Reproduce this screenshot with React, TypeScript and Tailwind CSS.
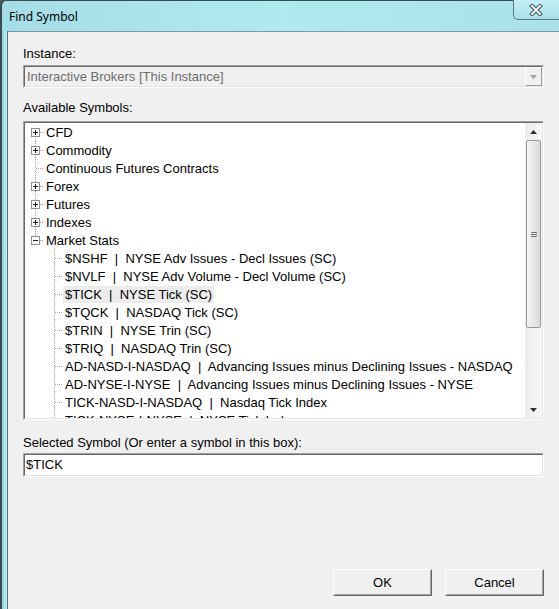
import React from "react"

type Row = {
  label: string
  level: 0 | 1
  box?: "plus" | "minus"
  first?: boolean
  lastRoot?: boolean
  selected?: boolean
}

const rows: Row[] = [
  { label: "CFD", level: 0, box: "plus", first: true },
  { label: "Commodity", level: 0, box: "plus" },
  { label: "Continuous Futures Contracts", level: 0 },
  { label: "Forex", level: 0, box: "plus" },
  { label: "Futures", level: 0, box: "plus" },
  { label: "Indexes", level: 0, box: "plus" },
  { label: "Market Stats", level: 0, box: "minus", lastRoot: true },
  { label: "$NSHF  |  NYSE Adv Issues - Decl Issues (SC)", level: 1 },
  { label: "$NVLF  |  NYSE Adv Volume - Decl Volume (SC)", level: 1 },
  { label: "$TICK  |  NYSE Tick (SC)", level: 1, selected: true },
  { label: "$TQCK  |  NASDAQ Tick (SC)", level: 1 },
  { label: "$TRIN  |  NYSE Trin (SC)", level: 1 },
  { label: "$TRIQ  |  NASDAQ Trin (SC)", level: 1 },
  { label: "AD-NASD-I-NASDAQ  |  Advancing Issues minus Declining Issues - NASDAQ", level: 1 },
  { label: "AD-NYSE-I-NYSE  |  Advancing Issues minus Declining Issues - NYSE", level: 1 },
  { label: "TICK-NASD-I-NASDAQ  |  Nasdaq Tick Index", level: 1 },
  { label: "TICK-NYSE-I-NYSE  |  NYSE Tick Index", level: 1 },
]

const dot = "#a0a0a0"

// tree connector lines and the +/- box for one row
function Connector({ row }: { row: Row }) {
  const w = row.level === 0 ? 19 : 38
  return (
    <svg width={w} height={18} className="shrink-0" shapeRendering="crispEdges">
      {row.level === 0 ? (
        <>
          <line
            x1={10.5}
            x2={10.5}
            y1={row.first ? 9 : 0}
            y2={row.lastRoot ? 9 : 18}
            stroke={dot}
            strokeDasharray="1 1"
          />
          <line x1={11} x2={19} y1={9.5} y2={9.5} stroke={dot} strokeDasharray="1 1" />
          {row.box && (
            <>
              <rect x={6.5} y={5.5} width={8} height={8} fill="#fff" stroke="#919191" />
              <line x1={8} x2={13} y1={9.5} y2={9.5} stroke="#222" />
              {row.box === "plus" && <line x1={10.5} x2={10.5} y1={7} y2={12} stroke="#222" />}
            </>
          )}
        </>
      ) : (
        <>
          <line x1={29.5} x2={29.5} y1={0} y2={18} stroke={dot} strokeDasharray="1 1" />
          <line x1={30} x2={38} y1={9.5} y2={9.5} stroke={dot} strokeDasharray="1 1" />
        </>
      )}
    </svg>
  )
}

function Sunken({ className, children }: { className?: string; children?: React.ReactNode }) {
  return (
    <div className={"border border-t-[#a0a0a0] border-l-[#a0a0a0] border-b-[#ffffff] border-r-[#ffffff] " + (className ?? "")}>
      <div className="h-full w-full border border-t-[#696969] border-l-[#696969] border-b-[#e3e3e3] border-r-[#e3e3e3]">
        {children}
      </div>
    </div>
  )
}

function Button({ children }: { children: React.ReactNode }) {
  return (
    <div className="w-[99px] h-[27px] border border-t-[#ffffff] border-l-[#ffffff] border-b-[#696969] border-r-[#696969]">
      <div className="h-full w-full flex items-center justify-center bg-[#f0f0f0] border border-t-[#f0f0f0] border-l-[#f0f0f0] border-b-[#a0a0a0] border-r-[#a0a0a0] text-black">
        {children}
      </div>
    </div>
  )
}

export default function App() {
  return (
    <div
      className="w-[559px] h-[609px] overflow-hidden bg-[#4d5a60] text-[13px]"
      style={{ fontFamily: '"Liberation Sans", Arial, sans-serif' }}
    >
      <div className="h-full flex flex-col rounded-tl-[6px] border-l-2 border-t border-[#3b4b52] bg-gradient-to-r from-[#a4dde7] via-[#b0eaf1] to-[#a9e2ea]">
        {/* title bar */}
        <div className="h-[30px] flex items-start justify-between shrink-0">
          <div className="pl-[7px] pt-[7px] text-[12px] text-black" style={{ fontFamily: '"Noto Sans", "Liberation Sans", sans-serif' }}>
            Find Symbol
          </div>
          <div className="w-[46px] h-[20px] -mt-px rounded-bl-[5px] border border-[#5f7880] border-t-0 border-r-0 bg-gradient-to-b from-[#c3f0f5] to-[#a6dfe8] flex items-center justify-center pr-[1px]">
            <svg width="14" height="12" viewBox="0 0 14 12">
              <path d="M3 2 L11 10 M11 2 L3 10" stroke="#3a4d57" strokeWidth="4" strokeLinecap="square" />
              <path d="M3 2 L11 10 M11 2 L3 10" stroke="#ffffff" strokeWidth="2" strokeLinecap="square" />
            </svg>
          </div>
        </div>

        <div className="flex-1 flex min-h-0">
          {/* left glass frame */}
          <div className="w-[5px] shrink-0 bg-gradient-to-r from-[#8fd3de] to-[#bff2f6]" />
          <div className="w-px shrink-0 bg-[#5c6f76]" />

          {/* client area */}
          <div className="flex-1 flex flex-col bg-[#f0f0f0] border-t border-[#7a9aa3] pl-[15px] pr-[15px] pt-[14px] text-black">
            <div className="leading-[15px]">Instance:</div>
            <Sunken className="mt-[4px] h-[23px]">
              <div className="h-full flex items-center">
                <div className="flex-1 pl-[2px] text-[#6d6d6d] whitespace-nowrap">Interactive Brokers [This Instance]</div>
                <div className="w-[17px] h-full border border-t-[#ffffff] border-l-[#ffffff] border-b-[#a0a0a0] border-r-[#a0a0a0] flex items-center justify-center bg-[#f0f0f0]">
                  <svg width="7" height="4" viewBox="0 0 7 4">
                    <path d="M0 0 H7 L3.5 4 Z" fill="#a0a0a0" />
                  </svg>
                </div>
              </div>
            </Sunken>

            <div className="mt-[12px] leading-[15px]">Available Symbols:</div>
            <Sunken className="mt-[6px] h-[299px]">
              <div className="h-full flex bg-white overflow-hidden">
                <div className="flex-1 min-w-0 overflow-hidden">
                  {rows.map((r) => (
                    <div key={r.label} className="h-[18px] flex items-center">
                      <Connector row={r} />
                      <div
                        className={
                          "whitespace-pre leading-[17px] h-[17px] px-[2px] " + (r.selected ? "bg-[#ececec]" : "")
                        }
                      >
                        {r.label}
                      </div>
                    </div>
                  ))}
                </div>
                {/* vertical scrollbar */}
                <div className="w-[17px] shrink-0 flex flex-col bg-gradient-to-r from-[#ececec] to-[#f7f7f7]">
                  <div className="h-[17px] flex items-center justify-center">
                    <svg width="7" height="4" viewBox="0 0 7 4">
                      <path d="M0 4 H7 L3.5 0 Z" fill="#2b2b2b" />
                    </svg>
                  </div>
                  <div className="h-[188px] mx-px rounded-[2px] border border-[#979797] bg-gradient-to-r from-[#f4f4f4] to-[#dadada] flex flex-col items-center justify-center gap-[1px]">
                    <div className="w-[6px] h-px bg-[#6f6f6f]" />
                    <div className="w-[6px] h-px bg-[#6f6f6f]" />
                    <div className="w-[6px] h-px bg-[#6f6f6f]" />
                  </div>
                  <div className="flex-1" />
                  <div className="h-[17px] flex items-center justify-center">
                    <svg width="7" height="4" viewBox="0 0 7 4">
                      <path d="M0 0 H7 L3.5 4 Z" fill="#2b2b2b" />
                    </svg>
                  </div>
                </div>
              </div>
            </Sunken>

            <div className="mt-[15px] leading-[15px]">Selected Symbol (Or enter a symbol in this box):</div>
            <Sunken className="mt-[3px] h-[24px]">
              <div className="h-full bg-white flex items-center pl-[1px]">$TICK</div>
            </Sunken>

            <div className="mt-auto mb-[13px] flex justify-end gap-[13px]">
              <Button>OK</Button>
              <Button>Cancel</Button>
            </div>
          </div>
        </div>
      </div>
    </div>
  )
}
